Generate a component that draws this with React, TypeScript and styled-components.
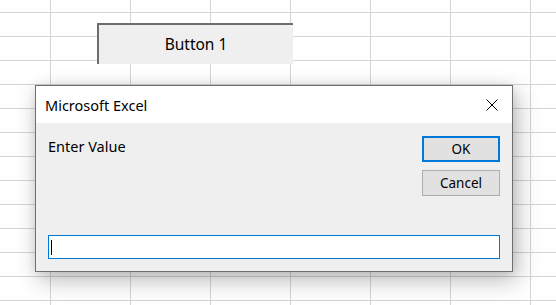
import React from "react";
import styled, { createGlobalStyle } from "styled-components";

const Global = createGlobalStyle`
  html, body { margin: 0; padding: 0; background: #fff; overflow: hidden; }
  * { box-sizing: border-box; }
`;

const Sheet = styled.div`
  position: relative;
  width: 556px;
  height: 305px;
  background-color: #fff;
  background-image:
    linear-gradient(to right, #d4d4d4 1px, transparent 1px),
    linear-gradient(to bottom, #d4d4d4 1px, transparent 1px);
  background-size: 80px 24px;
  background-position: 50px 12px;
  font-family: "Noto Sans", "Open Sans", sans-serif;
  color: #000;
`;

const FormButton = styled.div`
  position: absolute;
  left: 97px;
  top: 23px;
  width: 196px;
  height: 41px;
  background: #efefef;
  border-top: 2px solid #6d6d6d;
  border-left: 2px solid #6d6d6d;
  display: flex;
  align-items: center;
  justify-content: center;
  font-size: 15.5px;
  padding-bottom: 1px;
`;

const Dialog = styled.div`
  position: absolute;
  left: 35px;
  top: 85px;
  width: 478px;
  height: 187px;
  border: 1px solid #6f6f6f;
  background: #efefef;
  display: flex;
  flex-direction: column;
  box-shadow: 4px 8px 22px rgba(0, 0, 0, 0.28), 0 0 10px rgba(0, 0, 0, 0.08);
`;

const TitleBar = styled.div`
  height: 37px;
  background: #fff;
  display: flex;
  align-items: center;
  justify-content: space-between;
  padding: 0 14px 0 9px;
  font-size: 14.5px;
`;

const CloseIcon = styled.svg`
  width: 12px;
  height: 12px;
  display: block;
`;

const Body = styled.div`
  flex: 1;
  display: flex;
  flex-direction: column;
  padding: 13px 12px 12px 12px;
`;

const TopRow = styled.div`
  display: flex;
  justify-content: space-between;
  align-items: flex-start;
`;

const Prompt = styled.div`
  font-size: 14.5px;
  line-height: 20px;
`;

const ButtonCol = styled.div`
  display: flex;
  flex-direction: column;
  gap: 8px;
`;

const DlgButton = styled.div<{ $default?: boolean }>`
  width: 78px;
  height: 26px;
  background: #e1e1e1;
  border: ${(p) => (p.$default ? "2px solid #0078d7" : "1px solid #adadad")};
  display: flex;
  align-items: center;
  justify-content: center;
  font-size: 13.5px;
`;

const Input = styled.div`
  margin-top: auto;
  height: 24px;
  background: #fff;
  border: 1px solid #0078d7;
  display: flex;
  align-items: center;
  padding-left: 2px;
`;

const Caret = styled.div`
  width: 1px;
  height: 15px;
  background: #000;
`;

export default function App() {
  return (
    <>
      <Global />
      <Sheet>
        <FormButton>Button 1</FormButton>
        <Dialog>
          <TitleBar>
            <span>Microsoft Excel</span>
            <CloseIcon viewBox="0 0 12 12">
              <path d="M0.5 0.5 L11.5 11.5 M11.5 0.5 L0.5 11.5" stroke="#000" strokeWidth="1" fill="none" />
            </CloseIcon>
          </TitleBar>
          <Body>
            <TopRow>
              <Prompt>Enter Value</Prompt>
              <ButtonCol>
                <DlgButton $default>OK</DlgButton>
                <DlgButton>Cancel</DlgButton>
              </ButtonCol>
            </TopRow>
            <Input>
              <Caret />
            </Input>
          </Body>
        </Dialog>
      </Sheet>
    </>
  );
}
